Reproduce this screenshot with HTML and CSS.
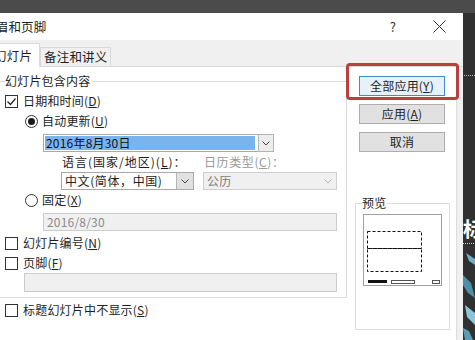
FILE: index.html
```html
<!DOCTYPE html>
<html lang="zh-CN">
<head>
<meta charset="utf-8">
<title>页眉和页脚</title>
<link rel="stylesheet" href="styles.css">
</head>
<body>
<div class="topbar"></div>
<div class="row">
  <div class="dialog">
    <div class="titlebar">
      <span class="title">页眉和页脚</span>
      <span class="help">?</span>
      <svg class="close" viewBox="0 0 13 13" width="13" height="13"><path d="M0.5 0.5 L12.5 12.5 M12.5 0.5 L0.5 12.5" stroke="#333" stroke-width="1" fill="none"/></svg>
    </div>
    <div class="tabs">
      <div class="tab active">幻灯片</div>
      <div class="tab inactive">备注和讲义</div>
    </div>
    <div class="pane">
      <div class="left">
        <fieldset class="group">
          <legend>幻灯片包含内容</legend>
          <div class="line"><span class="cb"><svg viewBox="0 0 11 11" width="11" height="11"><path d="M1.5 5.5 L4.5 8.5 L9.5 2.5" stroke="#222" stroke-width="1.2" fill="none"/></svg></span>日期和时间(<u>D</u>)</div>
          <div class="line ind-radio"><span class="rb on"></span>自动更新(<u>U</u>)</div>
          <div class="combo date-combo"><span class="sel">2016年8月30日</span><span class="arrow"><svg viewBox="0 0 8 5" width="8" height="5"><path d="M0.5 0.5 L4 4 L7.5 0.5" stroke="#444" fill="none"/></svg></span></div>
          <div class="labels"><span class="lbl-lang">语言(国家/地区)(<u>L</u>)：</span><span class="lbl-cal">日历类型(<u>C</u>)：</span></div>
          <div class="combos">
            <div class="combo lang-combo"><span class="val">中文(简体，中国)</span><span class="arrow"><svg viewBox="0 0 8 5" width="8" height="5"><path d="M0.5 0.5 L4 4 L7.5 0.5" stroke="#444" fill="none"/></svg></span></div>
            <div class="combo cal-combo"><span class="val">公历</span><span class="arrow"><svg viewBox="0 0 8 5" width="8" height="5"><path d="M0.5 0.5 L4 4 L7.5 0.5" stroke="#bbb" fill="none"/></svg></span></div>
          </div>
          <div class="line ind-radio fixed-row"><span class="rb"></span>固定(<u>X</u>)</div>
          <div class="field fixed-field">2016/8/30</div>
          <div class="line num-row"><span class="cb"></span>幻灯片编号(<u>N</u>)</div>
          <div class="line foot-row"><span class="cb"></span>页脚(<u>F</u>)</div>
          <div class="field footer-field"></div>
        </fieldset>
        <div class="line title-row"><span class="cb"></span>标题幻灯片中不显示(<u>S</u>)</div>
      </div>
      <div class="right">
        <button class="btn default">全部应用(<u>Y</u>)</button>
        <button class="btn">应用(<u>A</u>)</button>
        <button class="btn">取消</button>
        <fieldset class="preview">
          <legend>预览</legend>
          <div class="slide">
            <svg viewBox="0 0 77 70" width="77" height="70">
              <rect x="3.5" y="16.5" width="54" height="17" fill="none" stroke="#111" stroke-dasharray="3 2"/>
              <rect x="3.5" y="33.5" width="54" height="23" fill="none" stroke="#111" stroke-dasharray="3 2"/>
              <rect x="4" y="65" width="19" height="3" fill="#111"/>
              <rect x="27.5" y="65.5" width="23" height="3" fill="none" stroke="#555"/>
              <rect x="68.5" y="65.5" width="7" height="3" fill="none" stroke="#555"/>
            </svg>
          </div>
        </fieldset>
      </div>
    </div>
    <div class="highlight"></div>
  </div>
  <div class="side">
    <svg viewBox="0 0 12 327" width="12" height="327">
      <rect x="0" y="0" width="12" height="327" fill="#303030"/>
      <line x1="1" y1="62.5" x2="12" y2="62.5" stroke="#bbb" stroke-dasharray="1 1"/>
      <text x="0" y="224" font-size="20" fill="#fff" font-family="Noto Sans CJK SC, sans-serif" font-weight="bold">标</text>
      <line x1="0" y1="230.5" x2="12" y2="230.5" stroke="#ccc" stroke-dasharray="1 1"/>
      <polygon points="3,240 12,246 12,252 6,248" fill="#6fb0c6"/>
      <polygon points="0,262 8,270 12,285 5,280 0,272" fill="#4d8fa6"/>
      <polygon points="2,292 12,300 12,312 4,304" fill="#8cc6d6"/>
      <polygon points="0,315 6,318 10,327 2,327" fill="#5b9db3"/>
    </svg>
  </div>
</div>
</body>
</html>
```

FILE: styles.css
```css
* { box-sizing: border-box; }
html, body { margin: 0; padding: 0; }
body {
  width: 475px;
  height: 340px;
  overflow: hidden;
  background: #2e2e2e;
  font-family: "Noto Sans CJK SC", "Microsoft YaHei", sans-serif;
  font-size: 12px;
  letter-spacing: 0.2px;
  color: #1e1e1e;
}
.topbar { height: 13px; background: #4b4b4b; }
.row { display: flex; height: 327px; }
.dialog {
  position: relative;
  width: 463px;
  height: 327px;
  background: #f0f0f0;
  overflow: hidden;
  display: flex;
  flex-direction: column;
}
.titlebar { height: 27px; flex: none; background: #fff; display: flex; align-items: center; }
.title { flex: 1; font-size: 12.5px; line-height: 14px; margin-left: -17px; white-space: nowrap; }
.help { width: 10px; text-align: center; font-size: 13px; line-height: 14px; margin-right: 35px; color: #333; }
.close { margin-right: 17px; display: block; }

.tabs {
  height: 27px;
  flex: none;
  border-bottom: 1px solid #d9d9d9;
  display: flex;
  align-items: flex-end;
}
.tab { font-size: 12.5px; line-height: 14px; display: flex; align-items: center; white-space: nowrap; }
.tab.active {
  margin-left: -11px;
  width: 51px;
  height: 24px;
  margin-bottom: -1px;
  padding-left: 5px;
  background: #fff;
  border-top: 1px solid #d9d9d9;
  border-right: 1px solid #d9d9d9;
}
.tab.inactive {
  width: 71px;
  height: 19px;
  padding-left: 3px;
  border: 1px solid #d9d9d9;
  border-bottom: none;
}

.pane {
  flex: 1;
  background: #fff;
  margin-right: 6px;
  border-right: 1px solid #dcdcdc;
  display: flex;
}
.left { width: 347px; flex: none; }
.group {
  margin: 7px 0 0 0;
  padding: 6px 0 5px 5px;
  width: 347px;
  min-width: 0;
  border: 1px solid #dcdcdc;
  border-left: none;
}
legend { padding: 0 2px 0 0; font-size: 12px; line-height: 14px; }

.line { height: 14px; line-height: 14px; display: flex; align-items: center; white-space: nowrap; }
.cb {
  width: 13px; height: 13px;
  border: 1px solid #333;
  background: #fff;
  margin-right: 5px;
  display: flex; align-items: center; justify-content: center;
}
.rb {
  width: 13px; height: 13px;
  border: 1px solid #333;
  border-radius: 50%;
  background: #fff;
  margin-right: 4px;
  display: flex; align-items: center; justify-content: center;
}
.rb.on::after { content: ""; width: 7px; height: 7px; border-radius: 50%; background: #1a1a1a; }
.ind-radio { margin-top: 6px; margin-left: 20px; }

.combo { display: flex; align-items: stretch; border: 1px solid #a9a9a9; background: #fff; white-space: nowrap; }
.combo .arrow { display: flex; align-items: center; justify-content: center; }
.date-combo { margin: 6px 0 0 38px; width: 231px; height: 18px; }
.date-combo .sel { flex: 1; margin: 1px; background: #7ab4ef; line-height: 14px; padding-left: 1px; color: #111; }
.date-combo .arrow { width: 16px; margin: -1px -1px -1px 2px; border: 1px solid #b5b5b5; background: #ececec; }

.labels { height: 14px; line-height: 14px; margin: 3px 0 0 57px; display: flex; white-space: nowrap; }
.lbl-lang { width: 142px; letter-spacing: 1px; }
.lbl-cal { color: #9a9a9a; letter-spacing: 0.6px; }

.combos { display: flex; margin: 3px 0 0 56px; height: 18px; }
.lang-combo { width: 133px; }
.cal-combo { width: 134px; margin-left: 9px; background: #f0f0f0; border-color: #cfcfcf; color: #7a7a7a; }
.combo .val { flex: 1; line-height: 16px; padding-left: 3px; }
.lang-combo .val { letter-spacing: 0.6px; }
.lang-combo .arrow { width: 17px; background: #e1e1e1; border-left: 1px solid #b5b5b5; }
.cal-combo .arrow { width: 16px; }

.fixed-row { margin-top: 3px; }
.field { background: #f0f0f0; border: 1px solid #cccccc; color: #8a8a8a; line-height: 16px; padding-left: 3px; }
.fixed-field { margin: 6px 0 0 38px; width: 294px; height: 18px; }
.num-row { margin-top: 5px; }
.foot-row { margin-top: 6px; }
.footer-field { margin: 3px 0 0 19px; width: 313px; height: 19px; }
.title-row { margin-top: 5px; padding-left: 5px; }

.right { display: flex; flex-direction: column; align-items: flex-start; padding-top: 9px; }
.btn {
  margin-left: 12px;
  width: 86px;
  height: 20px;
  padding: 0;
  font-family: inherit;
  font-size: 12px;
  letter-spacing: 0.2px;
  line-height: 16px;
  color: #1e1e1e;
  background: #e1e1e1;
  border: 1px solid #adadad;
}
.btn + .btn { margin-top: 8px; }
.btn.default { background: #e5f1fb; border-color: #3c8dd0; }

.preview {
  margin: 44px 0 0 8px;
  width: 95px;
  min-width: 0;
  padding: 4px 0 43px 6px;
  border: 1px solid #dcdcdc;
}
.preview legend { padding: 0 1px 0 0; }
.slide { margin-left: 1px; width: 79px; height: 72px; border: 1px solid #a0a0a0; background: #fff; }
.slide svg { display: block; }

.highlight {
  position: absolute;
  left: 346px;
  top: 50px;
  width: 113px;
  height: 37px;
  border: 3px solid #b8403f;
  border-radius: 4px;
}
.side { width: 12px; flex: none; }
.side svg { display: block; }
```
